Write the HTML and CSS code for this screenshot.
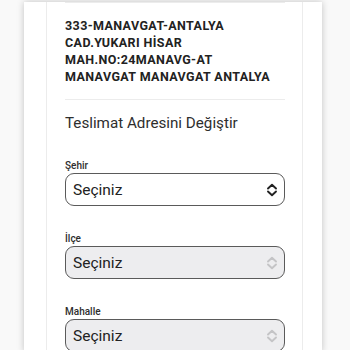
FILE: index.html
```html
<!DOCTYPE html>
<html lang="tr">

<head>
  <meta charset="UTF-8" />
  <meta name="viewport" content="width=device-width, initial-scale=1.0" />
  <title>Teslimat Adresi</title>
  <link rel="stylesheet" href="styles.css">
</head>

<body>
  <div class="page">
    <div class="panel">
      <div class="rule top-rule"></div>

      <p class="address">333-MANAVGAT-ANTALYA CAD.YUKARI HİSAR MAH.NO:24MANAVG-AT MANAVGAT MANAVGAT ANTALYA</p>

      <div class="rule"></div>

      <h2 class="title">Teslimat Adresini Değiştir</h2>

      <div class="field">
        <label for="city">Şehir</label>
        <div class="select-wrap">
          <select id="city">
            <option>Seçiniz</option>
          </select>
          <svg class="arrows" viewBox="0 0 12 14" width="12" height="14">
            <path d="M2 5.5 L6 1.8 L10 5.5 M2 8.5 L6 12.2 L10 8.5" />
          </svg>
        </div>
      </div>

      <div class="field">
        <label for="district">İlçe</label>
        <div class="select-wrap">
          <select id="district" disabled>
            <option>Seçiniz</option>
          </select>
          <svg class="arrows" viewBox="0 0 12 14" width="12" height="14">
            <path d="M2 5.5 L6 1.8 L10 5.5 M2 8.5 L6 12.2 L10 8.5" />
          </svg>
        </div>
      </div>

      <div class="field">
        <label for="quarter">Mahalle</label>
        <div class="select-wrap">
          <select id="quarter" disabled>
            <option>Seçiniz</option>
          </select>
          <svg class="arrows" viewBox="0 0 12 14" width="12" height="14">
            <path d="M2 5.5 L6 1.8 L10 5.5 M2 8.5 L6 12.2 L10 8.5" />
          </svg>
        </div>
      </div>
    </div>
  </div>
</body>

</html>
```

FILE: styles.css
```css
:root {
  --text-dark: #222222;
  --text-mid: #2e2e2e;
  --line: #ececec;
  --field-border: #5a5a5a;
  --field-disabled: #ededef;
}

body {
  margin: 0;
  font-family: Roboto, 'Liberation Sans', sans-serif;
  background-color: #f9f9f9;
  color: var(--text-dark);
  overflow: hidden;
}

.page {
  margin: 0 28px 0 24px;
  min-height: 350px;
  background: #ffffff;
  box-shadow: 0 0 7px rgba(0, 0, 0, 0.22);
}

.panel {
  margin: 0 19px 0 22px;
  min-height: 350px;
  padding: 0 17px 0 18px;
  border-left: 1px solid var(--line);
  border-right: 1px solid var(--line);
}

.rule {
  height: 1px;
  background: var(--line);
}

.top-rule {
  margin-top: 2px;
}

.address {
  margin: 0;
  padding: 14px 8px 14px 0;
  font-size: 12.5px;
  line-height: 17px;
  font-weight: 700;
  letter-spacing: 0.4px;
  color: var(--text-dark);
}

.title {
  margin: 0;
  padding: 13px 0 0;
  font-size: 15.2px;
  line-height: 20px;
  font-weight: 400;
  color: var(--text-mid);
}

.field {
  margin-top: 27px;
}

.field:first-of-type {
  margin-top: 22px;
}

.field label {
  display: block;
  font-size: 10px;
  line-height: 12px;
  font-weight: 500;
  color: var(--text-mid);
  margin-bottom: 1px;
}

.select-wrap {
  position: relative;
}

.select-wrap select {
  display: block;
  width: 100%;
  height: 33px;
  margin: 0;
  padding: 0 30px 0 7px;
  appearance: none;
  -webkit-appearance: none;
  background: #ffffff;
  border: 1.3px solid var(--field-border);
  border-radius: 9px;
  font-family: Roboto, 'Liberation Sans', sans-serif;
  font-size: 15.5px;
  color: var(--text-dark);
  opacity: 1;
}

.select-wrap select:disabled {
  background: var(--field-disabled);
  color: var(--text-dark);
}

.arrows {
  position: absolute;
  right: 7px;
  top: 10px;
  fill: none;
  stroke: #222;
  stroke-width: 1.9;
  stroke-linecap: round;
  stroke-linejoin: round;
  pointer-events: none;
}

select:disabled + .arrows {
  stroke: #c4c4c6;
}
```
